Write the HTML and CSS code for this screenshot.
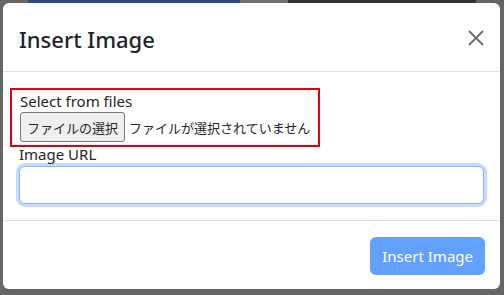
FILE: index.html
```html
<!DOCTYPE html>
<html lang="en">
<head>
    <meta charset="UTF-8">
    <meta name="viewport" content="width=device-width, initial-scale=1.0">
    <title>Insert Image</title>
    <link rel="stylesheet" href="styles.css">
</head>
<body>
    <div class="page-strip">
        <span class="strip-gap"></span>
        <span class="strip-blue"></span>
        <span class="strip-gray"></span>
        <span class="strip-dark"></span>
    </div>

    <div class="modal">
        <div class="modal-header">
            <h4 class="modal-title">Insert Image</h4>
            <button class="btn-close" aria-label="Close">
                <svg width="16" height="16" viewBox="0 0 16 16">
                    <path d="M1 1L15 15M15 1L1 15" stroke="#6c6c6c" stroke-width="1.8" fill="none"/>
                </svg>
            </button>
        </div>

        <div class="modal-body">
            <div class="file-group">
                <label class="form-label">Select from files</label>
                <div class="file-input">
                    <span class="file-button">ファイルの選択</span>
                    <span class="file-name">ファイルが選択されていません</span>
                </div>
            </div>

            <label class="form-label url-label">Image URL</label>
            <input type="text" class="form-control">
        </div>

        <div class="modal-footer">
            <button class="btn-primary" disabled>Insert Image</button>
        </div>
    </div>
</body>
</html>
```

FILE: styles.css
```css
* {
    margin: 0;
    padding: 0;
    box-sizing: border-box;
}

body {
    font-family: 'Noto Sans', 'Noto Sans CJK JP', sans-serif;
    background: #666;
    color: #212529;
    width: 504px;
    height: 295px;
    overflow: hidden;
}

.page-strip {
    display: flex;
    height: 3px;
}

.strip-gap {
    width: 28px;
}

.strip-blue {
    width: 212px;
    background: #2c4a7c;
}

.strip-gray {
    width: 48px;
    background: #707070;
}

.strip-dark {
    width: 188px;
    background: #2f3237;
}

.modal {
    margin-left: 3px;
    width: 497px;
    background: white;
    border-radius: 6px;
    overflow: hidden;
}

.modal-header {
    display: flex;
    justify-content: space-between;
    padding: 16px 15px 12px 16px;
    border-bottom: 1px solid #dee2e6;
}

.modal-title {
    font-size: 22px;
    font-weight: 500;
    line-height: 40px;
}

.btn-close {
    align-self: flex-start;
    margin-top: 11px;
    background: none;
    border: none;
    display: flex;
    padding: 0;
    margin-right: 1px;
}

.modal-body {
    padding: 16px;
    font-size: 15px;
}

.file-group {
    width: fit-content;
    margin-left: -9px;
    padding: 0 8px 3px;
    border: 2px solid #e6000a;
}

.form-label {
    display: block;
    line-height: 22px;
    color: #212529;
}

.file-input {
    display: flex;
    align-items: center;
    font-family: 'Noto Sans CJK JP', sans-serif;
    font-size: 13px;
}

.file-button {
    height: 30px;
    padding: 0 6px;
    display: flex;
    align-items: center;
    background: #efefef;
    border: 1px solid #767676;
    border-radius: 3px;
}

.file-name {
    margin-left: 4px;
}

.url-label {
    margin-top: -4px;
    line-height: 23px;
}

.form-control {
    display: block;
    width: 100%;
    height: 38px;
    border: 1px solid #86b7fe;
    border-radius: 6px;
    box-shadow: 0 0 0 3px rgba(13, 110, 253, 0.25);
    outline: none;
}

.modal-footer {
    display: flex;
    justify-content: flex-end;
    padding: 16px 15px 14px;
    border-top: 1px solid #dee2e6;
}

.btn-primary {
    height: 38px;
    padding: 0 12px;
    font-family: 'Noto Sans', sans-serif;
    font-size: 15px;
    color: white;
    background: #62a1fe;
    border: none;
    border-radius: 6px;
}
```
